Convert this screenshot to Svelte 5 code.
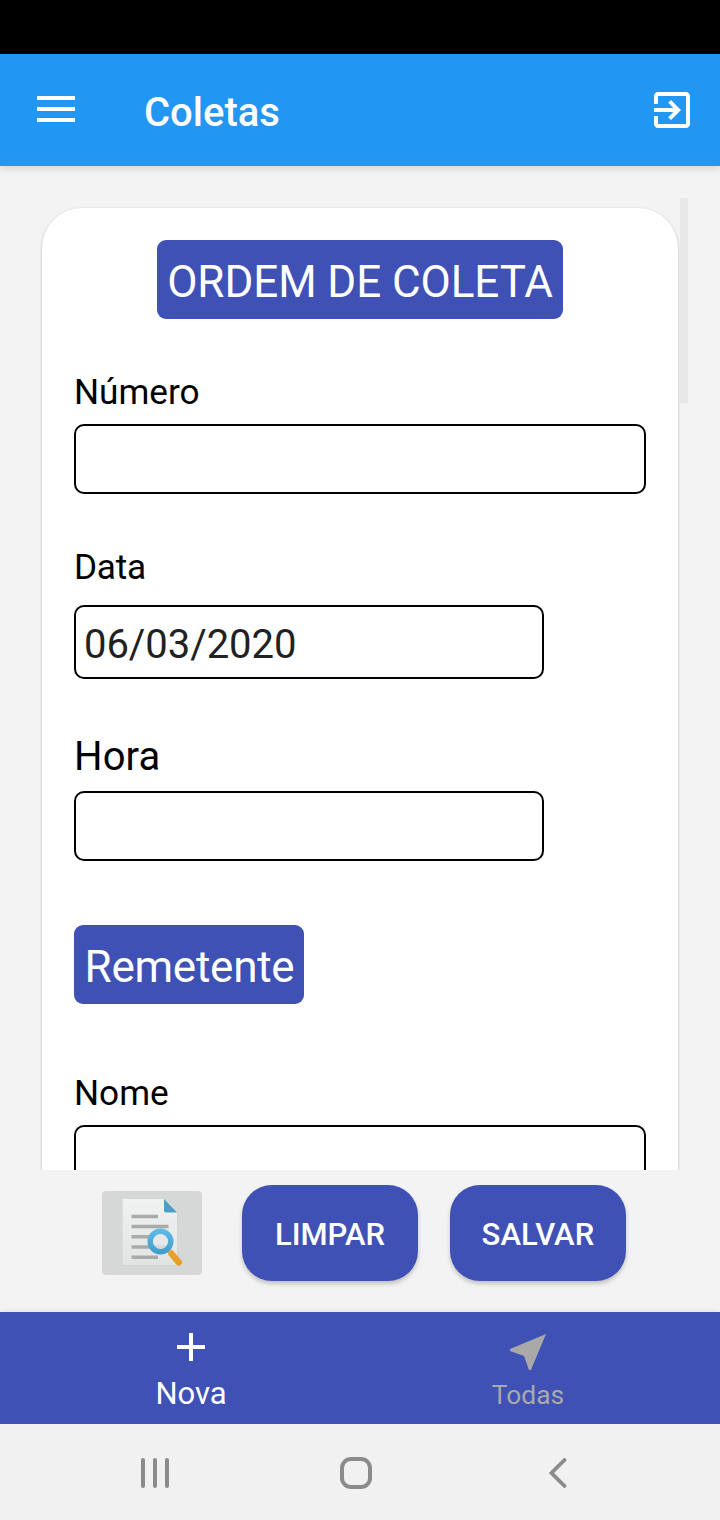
<script>
  let numero = $state('');
  let data = $state('06/03/2020');
  let hora = $state('');
  let nome = $state('');
</script>

<div class="screen">
  <div class="status"></div>
  <header class="appbar">
    <svg class="menu" width="38" height="26" viewBox="0 0 38 26"><path d="M0 2h38M0 13h38M0 24h38" stroke="#fff" stroke-width="4" /></svg>
    <h1>Coletas</h1>
    <svg class="exit" width="36" height="36" viewBox="3 3 18 18" fill="#fff">
      <path d="M10.090 15.590L11.500 17l5-5-5-5-1.410 1.410L12.670 11H3v2h9.670l-2.580 2.590zM19 3H5c-1.110 0-2 .9-2 2v4h2V5h14v14H5v-4H3v4c0 1.100.89 2 2 2h14c1.100 0 2-.9 2-2V5c0-1.100-.9-2-2-2z" />
    </svg>
  </header>

  <main class="content">
    <div class="card">
      <div class="tag center"><span>ORDEM DE COLETA</span></div>
      <div class="field first">
        <label for="numero">Número</label>
        <input id="numero" bind:value={numero} />
      </div>
      <div class="field date">
        <label for="data">Data</label>
        <input id="data" bind:value={data} />
      </div>
      <div class="field hour">
        <label for="hora">Hora</label>
        <input id="hora" bind:value={hora} />
      </div>
      <div class="tag sender"><span>Remetente</span></div>
      <div class="field name">
        <label for="nome">Nome</label>
        <input id="nome" bind:value={nome} />
      </div>
    </div>
    <div class="scrollbar"></div>
  </main>

  <section class="actions">
    <button class="search" aria-label="Pesquisar">
      <svg width="100" height="84" viewBox="0 0 100 84">
        <defs>
          <linearGradient id="paper" x1="0" y1="0" x2="0" y2="1"><stop offset="0" stop-color="#f0f1f1" /><stop offset="1" stop-color="#e2e3e3" /></linearGradient>
          <linearGradient id="ring" x1="0" y1="0" x2="0" y2="1"><stop offset="0" stop-color="#5bb9e5" /><stop offset="1" stop-color="#429fcd" /></linearGradient>
        </defs>
        <path d="M20 8H62V21H75.500V75H20Z" fill="#cfd0d0" opacity="0.6" />
        <path d="M20.500 8H62V21H75V74H20.500Z" fill="url(#paper)" />
        <path d="M62 8L75 21.500H64a2 2 0 0 1-2-2Z" fill="#4d9fc8" />
        <path d="M29.500 25.500H56M29.500 35.500H66.500M29.500 45.800H50M29.500 56H66M29.500 66.300H56" stroke="#a9aaaa" stroke-width="3.600" />
        <circle cx="58.500" cy="50.500" r="10.300" fill="#e6e7e7" fill-opacity="0.75" stroke="url(#ring)" stroke-width="5.400" />
        <path d="M69.300 62.500L76.800 71.300" stroke="#e7a02c" stroke-width="6.400" stroke-linecap="round" />
      </svg>
    </button>
    <button class="pill">LIMPAR</button>
    <button class="pill second">SALVAR</button>
  </section>

  <nav class="tabs">
    <div class="tab active">
      <svg width="28" height="28" viewBox="0 0 28 28"><path d="M14 0v28M0 14h28" stroke="#fff" stroke-width="4" /></svg>
      <span>Nova</span>
    </div>
    <div class="tab">
      <svg width="36" height="36" viewBox="0 0 36 36"><path d="M36 0L20.900 36H19L14 22 0 17V15.100Z" fill="#a9a9a9" /></svg>
      <span>Todas</span>
    </div>
  </nav>

  <footer class="system">
    <svg class="recent" width="28" height="30" viewBox="0 0 28 30"><path d="M2 2v26M14 2v26M26 2v26" stroke="#8b8b8b" stroke-width="4" stroke-linecap="round" /></svg>
    <svg class="home" width="32" height="32" viewBox="0 0 32 32"><rect x="2" y="2" width="28" height="28" rx="9" fill="none" stroke="#8b8b8b" stroke-width="4" /></svg>
    <svg class="back" width="18" height="30" viewBox="0 0 18 30"><path d="M15.500 2L2.500 15l13 13" fill="none" stroke="#8b8b8b" stroke-width="3.800" stroke-linecap="round" /></svg>
  </footer>
</div>

<style>
  :global(body) { margin: 0; }
  .screen {
    width: 720px;
    height: 1520px;
    display: flex;
    flex-direction: column;
    background: #f3f3f3;
    font-family: Roboto, "Liberation Sans", sans-serif;
    overflow: hidden;
  }
  .screen * { box-sizing: border-box; }
  svg { display: block; flex: none; }
  .status { height: 54px; background: #000; flex: none; }
  .appbar {
    height: 112px;
    flex: none;
    display: flex;
    align-items: center;
    padding: 0 30px 0 37px;
    background: #2196f3;
    box-shadow: 0 2px 8px rgba(0, 0, 0, 0.14);
    z-index: 1;
  }
  .menu { margin-bottom: 2px; }
  h1 {
    margin: 6px 0 0 69px;
    color: #fff;
    font-size: 40px;
    font-weight: 500;
    line-height: 48px;
    flex: 1;
  }
  .content {
    position: relative;
    height: 1004px;
    flex: none;
    overflow: hidden;
    padding: 42px 42px 0;
  }
  .card {
    height: 1200px;
    padding: 32px;
    background: #fff;
    border-radius: 40px;
    box-shadow: 0 1px 3px rgba(0, 0, 0, 0.26);
    display: flex;
    flex-direction: column;
    align-items: flex-start;
  }
  .scrollbar {
    position: absolute;
    top: 32px;
    right: 32px;
    width: 8px;
    height: 205px;
    background: #e7e7e7;
  }
  .tag {
    width: 230px;
    height: 79px;
    padding-top: 6px;
    border-radius: 9px;
    background: #3f51b5;
    color: #fff;
    font-size: 44px;
    line-height: 73px;
    text-align: center;
    white-space: nowrap;
    flex: none;
  }
  .tag.center { width: 406px; align-self: center; letter-spacing: -0.07px; }
  .sender { margin-top: 64px; padding-left: 1px; letter-spacing: -0.25px; }
  .field {
    display: flex;
    flex-direction: column;
    align-items: flex-start;
    width: 100%;
    flex: none;
  }
  .first { margin-top: 53px; }
  .date { margin-top: 53px; }
  .hour { margin-top: 55px; }
  .name { margin-top: 69px; }
  label {
    color: #000;
    font-size: 35.2px;
    line-height: 40px;
  }
  .date label { letter-spacing: -0.25px; }
  .hour label { font-size: 40px; line-height: 46px; letter-spacing: 0.1px; }
  input {
    width: 572px;
    height: 70px;
    margin: 12px 0 0;
    padding: 4px 8px 0;
    border: 2px solid #000;
    border-radius: 10px;
    background: #fff;
    color: #212121;
    font: 40px Roboto, "Liberation Sans", sans-serif;
    outline: 0;
  }
  .date input { width: 470px; height: 74px; margin-top: 18px; padding-top: 5px; letter-spacing: -0.05px; }
  .hour input { width: 470px; margin-top: 11px; }
  .actions {
    height: 142px;
    flex: none;
    display: flex;
    align-items: flex-start;
    padding: 15px 0 0 102px;
  }
  button { border: 0; padding: 0; font-family: inherit; }
  .search {
    width: 100px;
    height: 84px;
    margin-top: 6px;
    border-radius: 4px;
    background: #d6d8d7;
  }
  .pill {
    width: 176px;
    height: 96px;
    margin-left: 40px;
    padding: 2px 0 0;
    border-radius: 30px;
    background: #3f51b5;
    color: #fff;
    font-size: 31px;
    font-weight: 500;
    box-shadow: 0 3px 4px rgba(0, 0, 0, 0.2);
  }
  .second { margin-left: 32px; letter-spacing: 0.1px; }
  .tabs {
    height: 112px;
    flex: none;
    display: flex;
    padding: 0 24px 0 22px;
    background: #3f51b5;
    box-shadow: 0 0 6px rgba(0, 0, 0, 0.1);
  }
  .tab {
    flex: 1;
    display: flex;
    flex-direction: column;
    align-items: center;
    padding-top: 22px;
    color: #a9a9a9;
    font-size: 26.4px;
    line-height: 32px;
  }
  .tab span { margin-top: 9px; padding-left: 1px; }
  .tab.active { padding-top: 21px; color: #fff; font-size: 31px; }
  .tab.active span { margin-top: 17px; }
  .system {
    height: 96px;
    flex: none;
    display: flex;
    align-items: center;
    padding: 2px 153px 0 141px;
    justify-content: space-between;
    background: #f1f1f1;
    z-index: 1;
  }
  .home { margin-left: -6px; }
</style>
